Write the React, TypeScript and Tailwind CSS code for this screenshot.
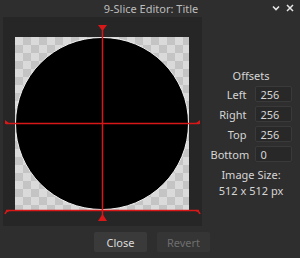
import React from 'react'

const offsets = [
  { label: 'Left', value: '256' },
  { label: 'Right', value: '256' },
  { label: 'Top', value: '256' },
  { label: 'Bottom', value: '0' },
]

function Guides() {
  const red = '#d81818'
  return (
    <svg className="absolute inset-0" width="199" height="209" viewBox="0 0 199 209">
      {/* vertical guide */}
      <line x1="99.5" y1="8" x2="99.5" y2="200" stroke={red} strokeWidth="1.5" />
      <polygon points="95,8 104,8 99.5,14" fill={red} />
      <polygon points="95,204 104,204 99.5,197" fill={red} />
      {/* horizontal guide */}
      <line x1="3" y1="106.5" x2="196" y2="106.5" stroke={red} strokeWidth="1.5" />
      <polygon points="2,103 2,107 7,107" fill={red} />
      <polygon points="197,103 197,107 192,107" fill={red} />
      {/* bottom guide */}
      <line x1="3" y1="193.5" x2="196" y2="193.5" stroke={red} strokeWidth="1.5" />
      <path d="M2,197 Q3,194 6,193.5" stroke={red} strokeWidth="1.5" fill="none" />
      <path d="M197,197 Q196,194 193,193.5" stroke={red} strokeWidth="1.5" fill="none" />
    </svg>
  )
}

export default function App() {
  return (
    <div className="w-[300px] h-[258px] bg-[#2e2e2e] flex flex-col text-[#d6d6d6] font-['Noto_Sans',sans-serif] text-[11px] leading-none">
      <div className="h-[17px] flex items-center relative">
        <div className="flex-1 text-center text-[#bdbdbd] pl-[2px]">9-Slice Editor: Title</div>
        <div className="absolute right-[6px] top-[4px] flex items-center gap-[6px]">
          <svg width="8" height="8" viewBox="0 0 8 8">
            <path d="M1,2.5 L4,5.5 L7,2.5" stroke="#e6e6e6" strokeWidth="1.6" fill="none" />
          </svg>
          <svg width="8" height="8" viewBox="0 0 8 8">
            <path d="M1,1 L7,7 M7,1 L1,7" stroke="#e6e6e6" strokeWidth="1.5" fill="none" />
          </svg>
        </div>
      </div>
      <div className="flex">
        <div className="ml-[3px] w-[199px] h-[209px] bg-[#262626] relative">
          <div className="ml-[12px] mt-[20px] w-[174px] h-[173px] bg-[conic-gradient(#c4c4c4_25%,#dadada_0_50%,#c4c4c4_0_75%,#dadada_0)] bg-[length:16px_16px] overflow-hidden">
            <div className="w-[174px] h-[173px] rounded-full bg-black border-[1.5px] border-[#f0f0f0]" />
          </div>
          <Guides />
        </div>
        <div className="flex-1 flex flex-col items-center pt-[53px]">
          <div className="h-[14px]">Offsets</div>
          <div className="mt-[2px] flex flex-col gap-[4px]">
            {offsets.map((o) => (
              <div key={o.label} className="flex items-center gap-[8px]">
                <div className="w-[36px] text-right">{o.label}</div>
                <div className="w-[37px] h-[16px] bg-[#282828] border border-[#3a3a3a] rounded-[2px] flex items-center pl-[5px]">
                  {o.value}
                </div>
              </div>
            ))}
          </div>
          <div className="mt-[5px] text-center leading-[16px]">
            <div>Image Size:</div>
            <div>512 x 512 px</div>
          </div>
        </div>
      </div>
      <div className="flex justify-center gap-[10px] mt-[6px] pl-[4px]">
        <button className="w-[53px] h-[20px] bg-[#3a3a3a] rounded-[2px] text-[#dcdcdc]">Close</button>
        <button className="w-[53px] h-[20px] bg-[#353535] rounded-[2px] text-[#6e6e6e]">Revert</button>
      </div>
    </div>
  )
}
